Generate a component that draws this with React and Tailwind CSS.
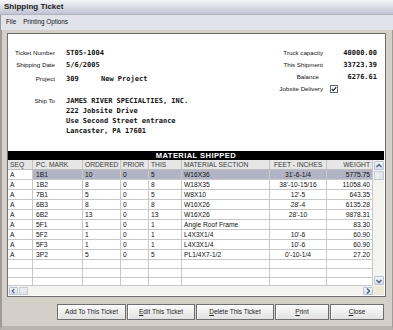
import React from "react";

const rows = [
  ["A", "1B1", "10", "0", "5", "W16X36", "31'-6-1/4", "5775.75"],
  ["A", "1B2", "8", "0", "8", "W18X35", "38'-10-15/16", "11058.40"],
  ["A", "7B1", "5", "0", "5", "W8X10", "12'-5", "643.35"],
  ["A", "6B3", "8", "0", "8", "W16X26", "28'-4", "6135.28"],
  ["A", "6B2", "13", "0", "13", "W16X26", "28'-10", "9878.31"],
  ["A", "5F1", "1", "0", "1", "Angle Roof Frame", "", "83.30"],
  ["A", "5F2", "1", "0", "1", "L4X3X1/4", "10'-6", "60.90"],
  ["A", "5F3", "1", "0", "1", "L4X3X1/4", "10'-6", "60.90"],
  ["A", "3P2", "5", "0", "5", "PL1/4X7-1/2", "0'-10-1/4", "27.20"],
];

const headers = ["SEQ", "PC. MARK", "ORDERED", "PRIOR", "THIS", "MATERIAL SECTION", "FEET - INCHES", "WEIGHT"];
const align = ["text-left pl-[2px]", "text-left pl-[3px]", "text-left pl-[2px]", "text-left pl-[2px]", "text-left pl-[2px]", "text-left pl-[2px]", "text-center", "text-right pr-[2px]"];
const cols = "grid grid-cols-[25px_50px_38px_28px_33px_88px_57px_46px]";
const mono = "text-[7px] font-bold font-['DejaVu_Sans_Mono',monospace]";

function Arrow({ dir }) {
  const pts = {
    up: "1.5,5 4,2.5 6.5,5",
    down: "1.5,3 4,5.5 6.5,3",
    left: "5,1.5 2.5,4 5,6.5",
    right: "3,1.5 5.5,4 3,6.5",
  }[dir];
  return (
    <svg width="8" height="8" viewBox="0 0 8 8">
      <polyline points={pts} fill="none" stroke="#4d6185" strokeWidth="1.4" />
    </svg>
  );
}

function SBtn({ dir, cls = "" }) {
  return (
    <div className={`flex items-center justify-center border border-[#b8c4d8] bg-gradient-to-b from-[#f2f4f8] to-[#d8dee8] rounded-[1px] ${cls}`}>
      <Arrow dir={dir} />
    </div>
  );
}

function Btn({ w, children }) {
  return (
    <div className={`${w} h-[16px] flex items-center justify-center border border-[#6e6e6e] bg-gradient-to-b from-[#fbfbfb] to-[#e2e2e2] text-[6.5px] text-[#222] shadow-[inset_1px_1px_0_#ffffff]`}>
      {children}
    </div>
  );
}

function RRow({ label, value, lcls = "" }) {
  return (
    <div className="h-[12px] flex items-center">
      <span className={`w-[70px] text-right text-[6.2px] ${lcls}`}>{label}</span>
      <span className={`w-[54px] text-right ${mono}`}>{value}</span>
    </div>
  );
}

export default function App() {
  return (
    <div className="w-[393px] h-[330px] bg-[#d4d0c8] flex flex-col font-['Liberation_Sans',Arial,sans-serif] text-[#111] overflow-hidden">
      {/* title bar */}
      <div className="h-[15px] bg-gradient-to-b from-[#f6f6fa] via-[#dcdce6] to-[#c2c2d2] flex items-center pl-[4px] border-b border-[#b0b0c0]">
        <span className="text-[8px] font-bold text-[#1a1a1a] leading-none">Shipping Ticket</span>
      </div>
      {/* menu bar */}
      <div className="h-[15px] bg-[#e2e2ea] flex items-center text-[6.3px] leading-none pl-[5px] gap-[7px] border-l border-[#9a9a9a]">
        <span>File</span>
        <span>Printing Options</span>
      </div>
      {/* body */}
      <div className="flex-1 flex flex-col border-l-[2px] border-r border-b-[4px] border-l-[#a09c94] border-r-[#a09c94] border-b-[#b8b4ac] pl-[5px] pr-[6px] pt-[3px]">
        <div className="h-[264px] bg-white border border-[#6f6f6f] flex flex-col">
          {/* info */}
          <div className="h-[117px] flex justify-between">
            <div className="pt-[13px] flex flex-col">
              <div className="h-[12px] flex items-center">
                <span className="w-[47px] text-right text-[6.2px]">Ticket Number</span>
                <span className={`ml-[11px] ${mono}`}>ST05-1004</span>
              </div>
              <div className="h-[12px] flex items-center">
                <span className="w-[47px] text-right text-[6.2px]">Shipping Date</span>
                <span className={`ml-[11px] ${mono}`}>5/6/2005</span>
              </div>
              <div className="h-[12px] mt-[2px] flex items-center">
                <span className="w-[47px] text-right text-[6.2px]">Project</span>
                <span className={`ml-[11px] w-[35px] ${mono}`}>309</span>
                <span className={mono}>New Project</span>
              </div>
              <div className="mt-[11px] flex">
                <span className="w-[47px] h-[10px] flex items-center justify-end text-[6.2px]">Ship To</span>
                <div className={`ml-[11px] flex flex-col ${mono}`}>
                  <span className="h-[10px] flex items-center">JAMES RIVER SPECIALTIES, INC.</span>
                  <span className="h-[10px] flex items-center">222 Jobsite Drive</span>
                  <span className="h-[10px] flex items-center">Use Second Street entrance</span>
                  <span className="h-[10px] flex items-center">Lancaster, PA 17601</span>
                </div>
              </div>
            </div>
            <div className="pt-[13px] pr-[8px] flex flex-col">
              <RRow label="Truck capacity" value="40000.00" />
              <RRow label="This Shipment" value="33723.39" />
              <RRow label="Balance" value="6276.61" lcls="pr-[4px]" />
              <div className="h-[12px] flex items-center">
                <span className="w-[70px] text-right text-[6.2px]">Jobsite Delivery</span>
                <div className="ml-[7px] w-[8px] h-[8px] border border-[#5a6a80] bg-white flex items-center justify-center">
                  <svg width="6" height="6" viewBox="0 0 6 6">
                    <polyline points="0.8,3 2.3,4.6 5.2,1.2" fill="none" stroke="#202020" strokeWidth="1.2" />
                  </svg>
                </div>
              </div>
            </div>
          </div>
          {/* grid */}
          <div className="w-[376px] flex flex-col">
            <div className="h-[9px] bg-black flex items-center justify-center">
              <span className="text-[7.6px] font-bold text-white tracking-[0.4px] leading-none">MATERIAL SHIPPED</span>
            </div>
            <div className="flex">
              <div className="w-[365px] flex flex-col">
                <div className={`${cols} h-[10px] bg-[#e6e6e6] border-b border-[#bdbdbd]`}>
                  {headers.map((h, i) => (
                    <div key={i} className={`${align[i]} text-[6.7px] leading-[10px] text-[#3a3a3a] border-r border-[#c4c4c4] whitespace-nowrap overflow-hidden`}>
                      {h}
                    </div>
                  ))}
                </div>
                {rows.map((r, ri) => (
                  <div key={ri} className={`${cols} h-[10px]`}>
                    {r.map((c, ci) => (
                      <div
                        key={ci}
                        className={`${align[ci]} text-[6.7px] leading-[9px] border-r border-b border-[#c8c8c8] whitespace-nowrap overflow-hidden ${ri === 0 && ci > 0 ? "bg-[#b3b3c6]" : "bg-white"}`}
                      >
                        {c}
                      </div>
                    ))}
                  </div>
                ))}
                {[9, 9, 8].map((h, ri) => (
                  <div key={"e" + ri} className={`${cols} ${h === 9 ? "h-[9px]" : "h-[8px]"}`}>
                    {headers.map((_, ci) => (
                      <div key={ci} className="border-r border-b border-[#c8c8c8]" />
                    ))}
                  </div>
                ))}
              </div>
              {/* vertical scrollbar */}
              <div className="w-[11px] bg-[#f3f3f0] flex flex-col items-center pt-[1px] pb-[1px]">
                <SBtn dir="up" cls="w-[10px] h-[9px]" />
                <div className="w-[10px] h-[9px] mt-[1px] border border-[#c4ccd8] bg-gradient-to-r from-[#eef0f4] to-[#dce0e8]" />
                <div className="flex-1" />
                <SBtn dir="down" cls="w-[10px] h-[9px]" />
              </div>
            </div>
            {/* horizontal scrollbar */}
            <div className="h-[9px] flex bg-[#f3f3f0]">
              <div className="w-[365px] flex items-center pl-[1px]">
                <SBtn dir="left" cls="w-[9px] h-[8px]" />
                <div className="w-[9px] h-[8px] ml-[1px] border border-[#c4ccd8] bg-gradient-to-b from-[#eef0f4] to-[#dce0e8]" />
                <div className="flex-1" />
                <SBtn dir="right" cls="w-[10px] h-[8px]" />
              </div>
              <div className="w-[11px] bg-[#ece9d8]" />
            </div>
          </div>
        </div>
        {/* buttons */}
        <div className="mt-[7px] flex justify-end pr-[2px] gap-[1px]">
          <Btn w="w-[69px]">Add To This Ticket</Btn>
          <Btn w="w-[68px]"><span><span className="underline">E</span>dit This Ticket</span></Btn>
          <Btn w="w-[78px]"><span><span className="underline">D</span>elete This Ticket</span></Btn>
          <Btn w="w-[54px]"><span><span className="underline">P</span>rint</span></Btn>
          <Btn w="w-[54px]"><span><span className="underline">C</span>lose</span></Btn>
        </div>
      </div>
    </div>
  );
}
